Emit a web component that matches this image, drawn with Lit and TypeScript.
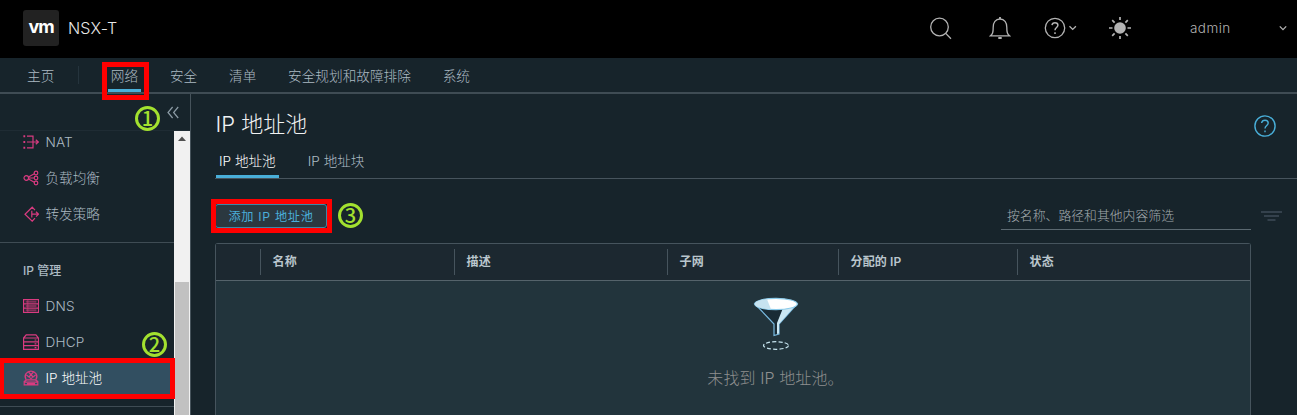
import { LitElement, html, css, svg } from "lit";
import { customElement } from "lit/decorators.js";

const sideIcons: Record<string, unknown> = {
  nat: svg`<path d="M4 2.2H10V13.8H4M4 8H15.2M12.8 5.7L15.3 8L12.8 10.3"/><path d="M.4 2.2H2.2M.4 8H2.2M.4 13.8H2.2" stroke-width="2"/>`,
  lb: svg`<circle cx="3.3" cy="8" r="2.3"/><circle cx="13" cy="3" r="1.8"/><circle cx="13" cy="8" r="1.8"/><circle cx="13" cy="13" r="1.8"/><path d="M5.5 7L11.3 3.8M5.6 8H11.2M5.5 9L11.3 12.3"/>`,
  fwd: svg`<path d="M12 4.2L9.2 1.2L2 8.2L9.2 15.2L12 12.2M8.8 4.8V11.6M8.8 8.2H15.4M13 5.8L15.5 8.2L13 10.6"/>`,
  dns: svg`<rect x=".6" y="1.6" width="14.9" height="12.8"/><path d="M.6 5.8H15.5M.6 10.1H15.5"/><path d="M2.6 3.7H13.5M2.6 8H13.5M2.6 12.3H13.5" stroke-width="2" opacity=".55"/><path d="M4.8 2V14" opacity=".5"/>`,
  dhcp: svg`<path d="M.6 4L3.2 .8H12.9L15.5 4V15.4H.6ZM.6 4H15.5M.6 7.8H15.5M.6 11.6H15.5M11.6 6H13.4M11.6 9.8H13.4M11.6 13.6H13.4"/>`,
  pool: svg`<path d="M3 9.6C.4 5 4 1.2 8 1.2S15.6 5 13 9.6M3.4 5L8 8.6L12.6 5M5.6 2L10 7M10.4 2L6 7M4 9.8H12L14.8 11.4V14.8H1.2V11.4ZM1.2 12.2H14.8M4 13.6H12"/>`,
};

@customElement("side-item")
class SideItem extends LitElement {
  static properties = { icon: {}, label: {}, active: { type: Boolean } };
  declare icon: string;
  declare label: string;
  declare active: boolean;
  static styles = css`
    :host { display: block; height: 36px; box-sizing: border-box; }
    .row { box-sizing: border-box; height: 36px; display: flex; align-items: center; gap: 6.5px; padding: 0 0 2px 23px; color: #acbac3; font-size: 13.6px; line-height: 20px; white-space: pre; }
    .row.active { background: #324f61; color: #fafafa; }
    svg { width: 16px; height: 16px; fill: none; stroke: #d93b80; stroke-width: 1.2; position: relative; top: 1px; }
    .cjk { padding-top: 2px; }
    .latin { padding-top: 1px; letter-spacing: .15px; }
  `;
  render() {
    const latin = /^[A-Z]+$/.test(this.label);
    return html`<div class="row ${this.active ? "active" : ""}">
      <svg viewBox="0 0 16 16">${sideIcons[this.icon]}</svg><span class="${latin ? "latin" : "cjk"}">${this.label}</span>
    </div>`;
  }
}

@customElement("app-root")
class AppRoot extends LitElement {
  static styles = css`
    :host {
      display: flex; flex-direction: column; position: relative; width: 1297px; height: 415px; overflow: hidden;
      background: #17242b; color: #acbac3;
      font-family: Inter, "Noto Sans CJK SC", sans-serif; font-weight: 300; font-size: 13.65px;
    }
    * { box-sizing: border-box; }
    svg { display: block; flex: none; }
    .header { height: 58px; flex: none; background: #000; display: flex; align-items: center; padding: 0 9px 2px 23px; }
    .logo { width: 36px; height: 36px; border-radius: 3px; background: #222; color: #fff; display: flex; align-items: center; justify-content: center; font-weight: 700; font-size: 18px; letter-spacing: -1px; padding: 0 0 3px 0; }
    .product { margin-left: 9px; color: #e8e8e8; font-size: 16px; letter-spacing: .2px; flex: 1; }
    .tools { display: flex; align-items: center; color: #b3b3b3; }
    .tools svg { fill: none; stroke: #b3b3b3; stroke-width: 1.3; }
    .search { margin-right: 36px; }
    .bell { margin-right: 33px; }
    .help { margin-right: 31px; }
    .user { margin-left: 58px; width: 88px; font-size: 13.5px; letter-spacing: .45px; }
    .nav { height: 36px; flex: none; border-bottom: 2px solid #3f4c54; display: flex; align-items: center; padding-left: 27px; white-space: pre; }
    .split { width: 1px; height: 18px; background: #25343d; margin: 0 31.5px 0 24px; }
    .link { margin-right: 31.8px; }
    .link.current { position: relative; }
    .link.current::after { content: ""; position: absolute; left: -3px; right: -3px; top: 24px; height: 3px; background: #49afd9; }
    .body { flex: 1; min-height: 0; display: flex; }
    .side { width: 191px; flex: none; display: flex; flex-direction: column; border-right: 1px solid #46535b; }
    .collapse { height: 37px; flex: none; display: flex; justify-content: flex-end; padding: 12px 11px 0 0; border-bottom: 1px solid #1f2c34; }
    .collapse svg { fill: none; stroke: #8c9ba5; stroke-width: 1.2; }
    .scroll { flex: 1; min-height: 0; display: flex; }
    .menu { flex: 1; overflow: hidden; }
    .menu .first { margin-top: -7px; }
    .rule { height: 1px; background: #3f4c54; margin-top: 10px; }
    .group { height: 46px; padding: 17px 0 0 23px; font-size: 12px; line-height: 21px; font-weight: 500; margin-bottom: -1px; }
    .bar { width: 16px; background: #f1f1f1; display: flex; flex-direction: column; align-items: center; }
    .bar svg { margin-top: 5px; fill: #505050; }
    .thumb { width: 14px; flex: 1; margin-top: 141px; background: #c1c1c1; }
    .main { flex: 1; min-width: 0; padding-left: 24px; display: flex; flex-direction: column; }
    .title { height: 50px; flex: none; display: flex; justify-content: space-between; padding: 14px 21px 0 .5px; font-size: 22px; line-height: 32px; color: #f0f2f3; }
    .title svg { margin-top: 7px; fill: none; stroke: #49afd9; stroke-width: 1.4; }
    .tabs { height: 35px; flex: none; display: flex; gap: 25px; border-bottom: 1px solid #47545d; font-size: 13.6px; line-height: 34px; }
    .tab { height: 34px; padding: 0 3.5px; }
    .tab:first-child { margin-left: .5px; }
    .tab.current { color: #fafafa; border-bottom: 3px solid #49afd9; }
    .actions { height: 64px; flex: none; display: flex; align-items: center; justify-content: space-between; padding: 9px 15px 0 0; }
    .add { width: 112px; height: 24px; border: 1px solid #3c87a7; border-radius: 3px; background: #2b3840; color: #4aaed9; display: flex; align-items: center; justify-content: center; font-size: 12.2px; letter-spacing: .7px; font-weight: 400; }
    .filter { display: flex; gap: 10px; align-items: center; }
    .input { width: 250px; height: 29px; border-bottom: 1px solid #5b6971; padding-left: 6px; font-size: 12.85px; line-height: 29px; color: #a3abaf; }
    .filter svg { stroke: #3f4b58; stroke-width: 1.6; }
    .grid { flex: 1; margin-right: 46px; border: 1px solid #46545d; border-bottom: 0; border-radius: 3px 3px 0 0; background: #22343c; }
    .cols { height: 37px; display: grid; align-items: center; grid-template-columns: 44px 194px 213px 171px 179px 1fr; background: #1c2830; border-bottom: 1px solid #55636b; font-size: 12px; font-weight: 600; color: #bac6cd; }
    .col { height: 26px; line-height: 26px; border-left: 1px solid #46545d; padding-left: 11.6px; letter-spacing: .1px; }
    .col.blank { border: 0; }
    .empty { display: flex; flex-direction: column; align-items: center; padding: 15px 0 0 86px; font-size: 16px; color: #8f8f8f; }
    .empty-text { margin-top: 15px; line-height: 26px; letter-spacing: .1px; margin-right: 1px; }
    .mark { position: absolute; border: 5px solid #f00; }
    .m1 { left: 102px; top: 62px; width: 47px; height: 38px; }
    .m2 { left: -1px; top: 358px; width: 176px; height: 41px; }
    .m3 { left: 211px; top: 199px; width: 121px; height: 34px; }
    .num { position: absolute; width: 25px; height: 25px; border: 3px solid #a3e12f; border-radius: 50%; color: #a3e12f; font: 500 20px/18px "Noto Sans CJK SC", sans-serif; text-align: center; }
    .n1 { left: 135px; top: 106px; }
    .n2 { left: 142px; top: 332px; }
    .n3 { left: 338px; top: 203px; }
  `;
  render() {
    return html`
      <div class="header">
        <div class="logo">vm</div>
        <div class="product">NSX-T</div>
        <div class="tools">
          <svg class="search" width="24" height="24" viewBox="0 0 24 24"><circle cx="10.5" cy="11" r="8.8"/><path d="M16.7 17.4L22 22.7"/></svg>
          <svg class="bell" width="22" height="24" viewBox="0 0 22 24"><path d="M1.5 19.8H20.5C18.3 17.8 17.8 16.5 17.8 11.2C17.8 6.5 15.5 3 11 3S4.2 6.5 4.2 11.2C4.2 16.5 3.7 17.8 1.5 19.8Z"/><path d="M11 1V3M9.3 22H12.7" stroke-width="1.8"/></svg>
          <svg class="help" width="33" height="24" viewBox="0 0 33 24"><circle cx="11" cy="12" r="9.7"/><path d="M8 9.2C8.2 7.6 9.4 6.8 11 6.8S13.9 7.7 13.9 9.3C13.9 11.4 11 11.6 11 14.2M11 16.3V18" stroke-width="1.5"/><path d="M25.5 10.2L28.7 13.4L31.9 10.2"/></svg>
          <svg width="24" height="24" viewBox="0 0 24 24"><circle cx="12" cy="12" r="5.8" fill="#b3b3b3" stroke="none"/><path stroke-width="1.7" d="M12 1V4M12 20V23M1 12H4.5M19.5 12H23M4.2 4.2L6.6 6.6M17.4 17.4L19.8 19.8M4.2 19.8L6.6 17.4M17.4 6.6L19.8 4.2"/></svg>
          <div class="user">admin</div>
          <svg width="10" height="8" viewBox="0 0 10 8"><path d="M1.8 2.4L5 5.6L8.2 2.4"/></svg>
        </div>
      </div>
      <div class="nav"><span>主页</span><span class="split"></span><span class="link current">网络</span><span class="link">安全</span><span class="link">清单</span><span class="link">安全规划和故障排除</span><span class="link">系统</span></div>
      <div class="body">
        <div class="side">
          <div class="collapse"><svg width="12" height="13" viewBox="0 0 12 13"><path d="M5.6 1L1 6.5L5.6 12M11.2 1L6.6 6.5L11.2 12"/></svg></div>
          <div class="scroll">
            <div class="menu">
              <side-item class="first" icon="nat" label="NAT"></side-item>
              <side-item icon="lb" label="负载均衡"></side-item>
              <side-item icon="fwd" label="转发策略"></side-item>
              <div class="rule"></div>
              <div class="group">IP 管理</div>
              <side-item icon="dns" label="DNS"></side-item>
              <side-item icon="dhcp" label="DHCP"></side-item>
              <side-item icon="pool" label="IP 地址池" active></side-item>
              <div class="rule"></div>
            </div>
            <div class="bar"><svg width="8" height="5" viewBox="0 0 8 5"><path d="M0 5L4 .5L8 5Z"/></svg><div class="thumb"></div></div>
          </div>
        </div>
        <div class="main">
          <div class="title"><span>IP 地址池</span>
            <svg width="22" height="22" viewBox="0 0 22 22"><circle cx="11" cy="11" r="10.1"/><path d="M7.6 8C7.9 6.2 9.2 5.2 11 5.2S14.2 6.3 14.2 8C14.2 10.4 11 10.6 11 13.6M11 15.4V17.2"/></svg>
          </div>
          <div class="tabs"><div class="tab current">IP 地址池</div><div class="tab">IP 地址块</div></div>
          <div class="actions">
            <div class="add">添加 IP 地址池</div>
            <div class="filter"><div class="input">按名称、路径和其他内容筛选</div>
              <svg width="21" height="12" viewBox="0 0 21 12"><path d="M0 2H21M3 6H18M6.5 10H14.5"/></svg></div>
          </div>
          <div class="grid">
            <div class="cols"><div class="col blank"></div><div class="col">名称</div><div class="col">描述</div><div class="col">子网</div><div class="col">分配的 IP</div><div class="col">状态</div></div>
            <div class="empty">
              <svg width="46" height="54" viewBox="0 0 46 54">
                <path d="M2 8L21 28V39.5L26 38V28L44 8Z" fill="#192b35" stroke="#78b9df" stroke-width="1.2"/>
                <path d="M43 9L30 12L24 27V38L26 37.5V28Z" fill="#cbe7f3"/>
                <ellipse cx="23" cy="8" rx="21.3" ry="5.7" fill="#fff" stroke="#8ccbea" stroke-width="1.2"/>
                <path d="M14 3.2L18 13.2C9 12.9 2 10.9 2 8C2 5.6 7 3.8 14 3.2Z" fill="#c7e3f0"/>
                <ellipse cx="23" cy="49.5" rx="12.5" ry="3.8" fill="none" stroke="#c6e4ef" stroke-width="1.2" stroke-dasharray="4 2.2"/>
              </svg>
              <div class="empty-text">未找到 IP 地址池。</div>
            </div>
          </div>
        </div>
      </div>
      <div class="mark m1"></div><div class="mark m2"></div><div class="mark m3"></div>
      <div class="num n1">1</div><div class="num n2">2</div><div class="num n3">3</div>
    `;
  }
}
